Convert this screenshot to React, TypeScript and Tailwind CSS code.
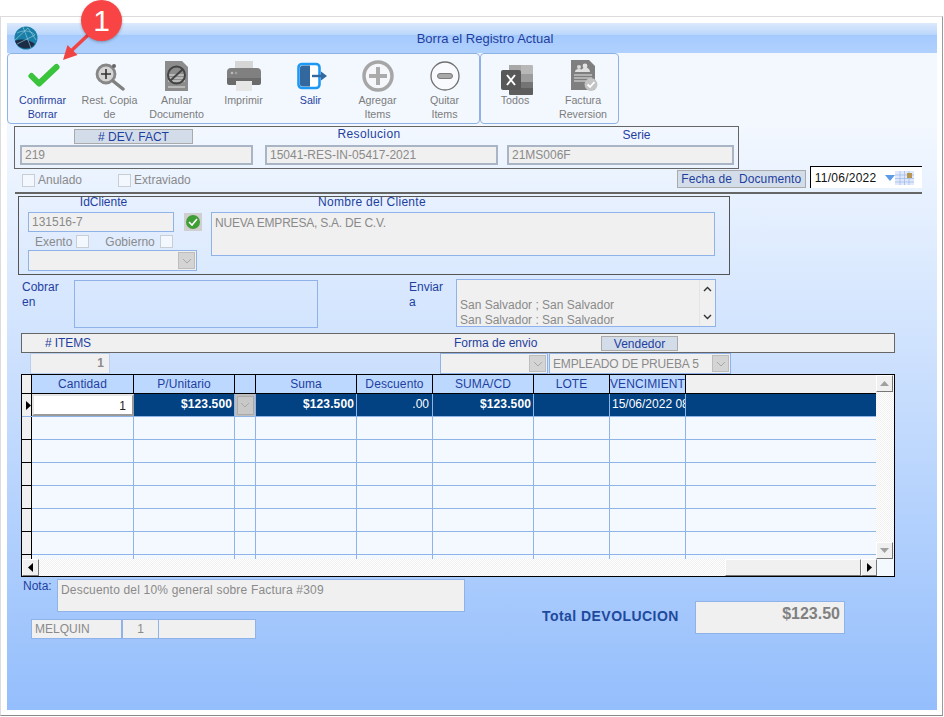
import type { ReactNode } from 'react';

const LABEL = 'text-[12px] leading-[14px] text-[#1f3f9f]';
const VALUE = 'text-[12px] leading-[14px] text-[#8a8a8a]';

function Chevron() {
  return (
    <svg width="10" height="6" viewBox="0 0 10 6" fill="none" stroke="#a8a8a8" strokeWidth="1">
      <path d="M1 1l4 4 4-4" />
    </svg>
  );
}

function SelectBox({ width, children }: { width: string; children?: ReactNode }) {
  return (
    <div className={`${width} h-[21px] flex items-center justify-between border border-[#8fb2e8] bg-[#f0f0f0] pl-[3px] pr-[1px] ${VALUE}`}>
      <span className="whitespace-nowrap tracking-[-0.15px]">{children}</span>
      <div className="w-[17px] h-[17px] flex items-center justify-center bg-[#d4d4d4] border border-[#bdbdbd]">
        <Chevron />
      </div>
    </div>
  );
}

function Check() {
  return <div className="w-[13px] h-[13px] shrink-0 border border-[#c9cdd4] bg-[#f3f8ff]" />;
}

function CheckIcon() {
  return (
    <svg width="36" height="30" viewBox="0 0 36 30">
      <path d="M6.500 15l7.500 7.500L31.500 6" fill="none" stroke="#3ac43c" strokeWidth="6" strokeLinecap="round" strokeLinejoin="round" />
    </svg>
  );
}

function RestoreIcon() {
  return (
    <svg width="32" height="30" viewBox="0 0 32 30">
      <circle cx="12" cy="13" r="9" fill="#d4d4d4" stroke="#878787" strokeWidth="2.800" />
      <path d="M19 20l10 8" stroke="#808080" strokeWidth="3.500" strokeLinecap="round" />
      <path d="M12 8v10M7 13h10" stroke="#333" strokeWidth="1.600" />
      <circle cx="20" cy="5" r="2" fill="#666" />
    </svg>
  );
}

function VoidIcon() {
  return (
    <svg width="24" height="30" viewBox="0 0 24 30">
      <path d="M0 0h17l6 6v24H0z" fill="#8c8c8c" />
      <path d="M3 14h17M3 17h17M3 20h17M3 26h17" stroke="#e4e4e4" strokeWidth="1.200" />
      <circle cx="11.500" cy="14" r="8.500" fill="none" stroke="#444" strokeWidth="2" />
      <path d="M5 20L18 8" stroke="#444" strokeWidth="2" />
    </svg>
  );
}

function PrinterIcon() {
  return (
    <svg width="34" height="30" viewBox="0 0 34 30">
      <path d="M8 0h18v8H8z" fill="#d6d6d6" />
      <path d="M0 11a4 4 0 0 1 4-4h26a4 4 0 0 1 4 4v11H0z" fill="#808080" />
      <path d="M0 17h34v5a2 2 0 0 1-2 2H2a2 2 0 0 1-2-2z" fill="#6b6b6b" />
      <path d="M9 20h16v10H9z" fill="#e6e6e6" />
      <circle cx="5" cy="12" r="1.300" fill="#bbb" />
      <circle cx="9" cy="12" r="1.300" fill="#a0a0a0" />
    </svg>
  );
}

function ExitIcon() {
  return (
    <svg width="32" height="30" viewBox="0 0 32 30">
      <rect x="3.500" y="3" width="21" height="24" rx="3.500" fill="#fff" stroke="#1e98f5" strokeWidth="2.600" />
      <path d="M5 7a2.500 2.500 0 0 1 2.500-2.500H15v21H7.500A2.500 2.500 0 0 1 5 23z" fill="#33689f" />
      <path d="M17 15h10" stroke="#33689f" strokeWidth="2.400" />
      <path d="M26 10.500l6 4.500-6 4.500z" fill="#33689f" />
    </svg>
  );
}

function PlusIcon() {
  return (
    <svg className="-mt-[1px]" width="32" height="32" viewBox="0 0 32 32">
      <circle cx="16" cy="16" r="14" fill="#f5f7fb" stroke="#a6a6a6" strokeWidth="3.500" />
      <path d="M16 7v18M7 16h18" stroke="#ababab" strokeWidth="4" />
    </svg>
  );
}

function MinusIcon() {
  return (
    <svg width="30" height="30" viewBox="0 0 30 30">
      <circle cx="15" cy="15" r="14" fill="#f8fafd" stroke="#707070" strokeWidth="1.300" />
      <rect x="7.500" y="12.500" width="15" height="5" rx="2.500" fill="#a8a8a8" stroke="#7a7a7a" strokeWidth="1" />
    </svg>
  );
}

function ExcelIcon() {
  return (
    <svg className="mt-[4px] ml-[3px]" width="32" height="30" viewBox="0 0 32 30">
      <path d="M8 0h22a2 2 0 0 1 2 2v7H8z" fill="#a8a8a8" />
      <path d="M20 0h10a2 2 0 0 1 2 2v7H20z" fill="#b8b8b8" />
      <path d="M8 9h24v8H8z" fill="#8c8c8c" />
      <path d="M20 9h12v8H20z" fill="#9c9c9c" />
      <path d="M8 17h24v12a1 1 0 0 1-1 1H9a1 1 0 0 1-1-1z" fill="#5e5e5e" />
      <path d="M20 17h12v6H20z" fill="#747474" />
      <rect x="0" y="5" width="20" height="20" rx="2" fill="#585858" />
      <path d="M6 10l8 10M14 10l-8 10" stroke="#fff" strokeWidth="2" />
    </svg>
  );
}

function InvoiceIcon() {
  return (
    <svg className="-mt-[1px] ml-[2px]" width="27" height="31" viewBox="0 0 27 31">
      <path d="M0 0h18l6 6v24H0z" fill="#7f7f7f" />
      <circle cx="8" cy="7" r="2" fill="#d8d8d8" />
      <circle cx="14" cy="6" r="2.400" fill="#e4e4e4" />
      <path d="M4 12a4 3 0 0 1 8 0zM10 12a4 4 0 0 1 9 0z" fill="#e0e0e0" />
      <path d="M3 15h18M3 18h18M3 21h12" stroke="#e6e6e6" strokeWidth="1.200" />
      <circle cx="20" cy="24.500" r="6.500" fill="#c4c4c4" />
      <path d="M16.500 24.500l2.500 2.500 4.500-5" fill="none" stroke="#fff" strokeWidth="1.800" />
    </svg>
  );
}

function Globe() {
  return (
    <svg width="24" height="24" viewBox="0 0 24 24">
      <circle cx="12" cy="12" r="11.500" fill="#1a7fa6" />
      <path d="M1 15a11.500 11.500 0 0 0 20 3c-5-4-13-6-20-3z" fill="#1c2c46" />
      <path d="M3 7c6-3 13-3 18 2M9 1l8 21M1 14L14 2M14 2l8 12M3 18L21 9" fill="none" stroke="#9ed3e6" strokeWidth="0.600" />
    </svg>
  );
}

function ToolButton({ icon, lines, width, dark }: { icon: ReactNode; lines: string[]; width: string; dark?: boolean }) {
  return (
    <div className={`${width} flex flex-col items-center`}>
      <div className="h-[38px] pt-[7px] flex items-start justify-center">{icon}</div>
      <div className={`text-center text-[10.7px] leading-[14px] whitespace-nowrap mt-[1px] ${dark ? 'text-[#1f3f9f]' : 'text-[#7c7c7c]'}`}>
        {lines.map((line) => (
          <div key={line}>{line}</div>
        ))}
      </div>
    </div>
  );
}

const COLUMNS = ['w-[102px]', 'w-[101px]', 'w-[21px]', 'w-[101px]', 'w-[76px]', 'w-[101px]', 'w-[76px]', 'w-[76px]'];
const HEADERS = ['Cantidad', 'P/Unitario', '', 'Suma', 'Descuento', 'SUMA/CD', 'LOTE', 'VENCIMIENTO'];
const DITHER = 'bg-[repeating-conic-gradient(#f0f0f0_0_25%,#ffffff_0_50%)] bg-[length:2px_2px]';
const RAISED = 'bg-[#f0f0f0] border border-t-white border-l-white border-r-[#777] border-b-[#777]';

function ItemsGrid() {
  return (
    <div className="ml-[14px] w-[874px] h-[203px] border border-black bg-[#f4f8ff] flex flex-col overflow-hidden">
      <div className="flex flex-1 min-h-0">
        <div className="flex-1 min-w-0 overflow-hidden">
          {/* cabecera */}
          <div className="flex h-[19px] border-b border-black">
            <div className="w-[10px] shrink-0 bg-[#f0f0f0] border-r border-black" />
            {HEADERS.map((h, i) => (
              <div
                key={i}
                className={`${COLUMNS[i]} shrink-0 bg-[#bcd8fe] border-r border-black text-[12px] leading-[18px] text-[#1f3f9f] text-center whitespace-nowrap overflow-hidden tracking-[0.1px]`}
              >
                {h}
              </div>
            ))}
            <div className="flex-1 bg-[#f0f0f0]" />
          </div>
          {/* fila seleccionada */}
          <div className="flex h-[23px] border-b border-[#8fb4e8] bg-[#024182] text-white text-[12px] font-bold leading-[21px]">
            <div className="w-[10px] shrink-0 bg-[#f0f0f0] border-r border-black flex items-center pl-[4px]">
              <svg width="5" height="9" viewBox="0 0 5 9">
                <path d="M0 0l5 4.500L0 9z" fill="#000" />
              </svg>
            </div>
            <div className="w-[102px] shrink-0 bg-white border-2 border-[#e4e4e4] border-b-[#9a9a9a] border-r-[#9a9a9a] text-right pr-[6px] font-normal text-[#222]">1</div>
            <div className="w-[101px] shrink-0 border-r border-[#8fb4e8] text-right pr-[2px] tracking-[0.12px]">$123.500</div>
            <div className="w-[21px] shrink-0 border-r border-[#8fb4e8] flex items-center justify-center bg-[#bdbdbd]">
              <div className="w-[17px] h-[19px] bg-[#c8c8c8] flex items-center justify-center border border-[#aaa]">
                <Chevron />
              </div>
            </div>
            <div className="w-[101px] shrink-0 border-r border-[#8fb4e8] text-right pr-[2px] tracking-[0.12px]">$123.500</div>
            <div className="w-[76px] shrink-0 border-r border-[#8fb4e8] text-right pr-[3px] font-normal">.00</div>
            <div className="w-[101px] shrink-0 border-r border-[#8fb4e8] text-right pr-[2px] tracking-[0.12px]">$123.500</div>
            <div className="w-[76px] shrink-0 border-r border-[#8fb4e8]" />
            <div className="w-[76px] shrink-0 border-r border-[#8fb4e8] font-normal pl-[2px] whitespace-nowrap overflow-hidden">15/06/2022 08:00</div>
            <div className="flex-1" />
          </div>
          {/* filas vacias */}
          {[0, 1, 2, 3, 4, 5, 6].map((r) => (
            <div key={r} className="flex h-[23px] border-b border-[#8fb4e8]">
              <div className="w-[10px] shrink-0 bg-[#f0f0f0] border-r border-black border-b -mb-px border-b-black" />
              {COLUMNS.map((c, i) => (
                <div key={i} className={`${c} shrink-0 border-r border-[#8fb4e8]`} />
              ))}
            </div>
          ))}
        </div>
        {/* barra vertical */}
        <div className={`w-[18px] shrink-0 flex flex-col justify-between ${DITHER}`}>
          <div className={`h-[17px] w-[17px] flex items-center justify-center ${RAISED}`}>
            <svg width="9" height="5" viewBox="0 0 9 5">
              <path d="M4.500 0L9 5H0z" fill="#a0a0a0" />
            </svg>
          </div>
          <div className={`h-[17px] w-[17px] flex items-center justify-center ${RAISED}`}>
            <svg width="9" height="5" viewBox="0 0 9 5">
              <path d="M0 0h9L4.500 5z" fill="#a0a0a0" />
            </svg>
          </div>
        </div>
      </div>
      {/* barra horizontal */}
      <div className="h-[17px] shrink-0 flex">
        <div className={`w-[17px] flex items-center justify-center ${RAISED}`}>
          <svg width="5" height="9" viewBox="0 0 5 9">
            <path d="M5 0v9L0 4.500z" fill="#000" />
          </svg>
        </div>
        <div className={`w-[686px] ${DITHER}`} />
        <div className={`w-[136px] ${RAISED}`} />
        <div className={`w-[16px] flex items-center justify-center ${RAISED}`}>
          <svg width="5" height="9" viewBox="0 0 5 9">
            <path d="M0 0v9l5-4.500z" fill="#000" />
          </svg>
        </div>
        <div className="flex-1" />
      </div>
    </div>
  );
}

export default function App() {
  return (
    <div className="relative w-[944px] h-[717px] overflow-hidden bg-white pt-[16px] font-['Liberation_Sans',Arial,sans-serif]">
      <div className="h-[700px] w-[943px] border border-[#dcdcdc] border-b-[#8a8a8a] border-r-[#9a9a9a] pl-[6px] pt-[6px]">
        <div className="w-[930px] h-[687px] flex flex-col">
          {/* titulo */}
          <div className="h-[30px] shrink-0 flex items-center pl-[7px] bg-[linear-gradient(#dbe9fc_0%,#bdd8fc_38%,#a5cafd_40%,#b0d1fe_100%)]">
            <Globe />
            <div className="flex-1 text-center pr-[5px] pt-[1px] text-[13px] text-[#1f3f9f]">Borra el Registro Actual</div>
          </div>

          {/* ribbon */}
          <div className="h-[71px] shrink-0 flex bg-[#f3f8ff]">
            <div className="w-[473px] border border-[#8fb2e4] rounded-[4px] pl-[1px] flex">
              <ToolButton width="w-[67px]" dark icon={<CheckIcon />} lines={['Confirmar', 'Borrar']} />
              <ToolButton width="w-[67px]" icon={<RestoreIcon />} lines={['Rest. Copia', 'de']} />
              <ToolButton width="w-[67px]" icon={<VoidIcon />} lines={['Anular', 'Documento']} />
              <ToolButton width="w-[67px]" icon={<PrinterIcon />} lines={['Imprimir']} />
              <ToolButton width="w-[67px]" dark icon={<ExitIcon />} lines={['Salir']} />
              <ToolButton width="w-[67px]" icon={<PlusIcon />} lines={['Agregar', 'Items']} />
              <ToolButton width="w-[67px]" icon={<MinusIcon />} lines={['Quitar', 'Items']} />
            </div>
            <div className="w-[139px] border border-[#8fb2e4] rounded-[4px] flex">
              <ToolButton width="w-[68px]" icon={<ExcelIcon />} lines={['Todos']} />
              <ToolButton width="w-[68px]" icon={<InvoiceIcon />} lines={['Factura', 'Reversion']} />
            </div>
          </div>

          {/* cuerpo */}
          <div className="flex-1 flex flex-col bg-[linear-gradient(#f3f8ff,#94befc)]">
            {/* documento */}
            <div className="ml-[7px] mt-[2px] w-[725px] h-[43px] border border-[#666] flex pl-[5px] shrink-0">
              <div className="w-[233px] flex flex-col">
                <div className={`ml-[54px] mt-[2px] w-[119px] h-[15px] bg-[#d3dde9] border border-[#aaa] text-center ${LABEL}`}>
                  # DEV. FACT
                </div>
                <div className={`h-[20px] border-2 border-[#a9b5c4] bg-[#f0f0f0] pl-[3px] mt-[1px] !leading-[17px] ${VALUE}`}>219</div>
              </div>
              <div className="ml-[12px] w-[233px] flex flex-col">
                <div className={`h-[17px] text-center pr-[25px] tracking-[0.35px] ${LABEL}`}>Resolucion</div>
                <div className={`h-[20px] border-2 border-[#a9b5c4] bg-[#f0f0f0] pl-[3px] mt-[1px] !leading-[17px] ${VALUE}`}>15041-RES-IN-05417-2021</div>
              </div>
              <div className="ml-[9px] w-[227px] flex flex-col">
                <div className={`h-[17px] pt-[1px] pl-[32px] text-center ${LABEL}`}>Serie</div>
                <div className={`h-[20px] border-2 border-[#a9b5c4] bg-[#f0f0f0] pl-[3px] mt-[1px] !leading-[17px] ${VALUE}`}>21MS006F</div>
              </div>
            </div>

            {/* estado y fecha */}
            <div className="-mt-[3px] h-[22px] shrink-0 flex items-end pl-[15px]">
              <div className="flex items-center mb-[1px]">
                <Check />
                <span className={`ml-[3px] ${VALUE}`}>Anulado</span>
              </div>
              <div className="flex items-center ml-[36px] mb-[1px]">
                <Check />
                <span className={`ml-[3px] ${VALUE}`}>Extraviado</span>
              </div>
              <div className={`ml-[486px] w-[129px] h-[18px] bg-[#d3dde9] border border-[#aaa] text-center !leading-[17px] tracking-[0.1px] ${LABEL}`}>
                Fecha de&nbsp; Documento
              </div>
              <div className="ml-[4px] w-[112px] h-[22px] bg-white border-t border-l border-black flex items-center pl-[4px] text-[12px] tracking-[0.25px] text-[#111]">
                <span>11/06/2022</span>
                <svg className="ml-[9px]" width="10" height="6" viewBox="0 0 10 6">
                  <path d="M0 0h10L5 6z" fill="#5b9be8" />
                </svg>
                <svg width="19" height="14" viewBox="0 0 19 14">
                  <path d="M0 0h19v14H0z" fill="#dfe9fb" />
                  <path d="M0 4h19M0 7.500h19M0 11h19M5 0v14M9.500 0v14M14 0v14" stroke="#9db8e8" strokeWidth="0.700" />
                  <rect x="12" y="2" width="5" height="5" fill="#b8954e" />
                </svg>
              </div>
            </div>

            <div className="ml-[8px] mt-[4px] w-[907px] h-[2px] bg-[#666] shrink-0" />

            {/* cliente */}
            <div className="ml-[11px] mt-[2px] w-[712px] h-[79px] border border-[#555] flex pl-[9px] shrink-0">
              <div className="w-[169px]">
                <div className={`h-[15px] text-center pr-[18px] !leading-[10px] ${LABEL}`}>IdCliente</div>
                <div className="flex items-center">
                  <div className={`w-[146px] shrink-0 h-[20px] border border-[#8fb2e8] bg-[#f0f0f0] pl-[3px] !leading-[18px] ${VALUE}`}>131516-7</div>
                  <div className="ml-[10px] w-[18px] h-[18px] shrink-0 bg-[#cfcfcf] flex items-center justify-center">
                    <svg width="14" height="14" viewBox="0 0 14 14">
                      <circle cx="7" cy="7" r="7" fill="#3f9e35" />
                      <path d="M3 7l3 3 5-6" fill="none" stroke="#fff" strokeWidth="1.600" />
                    </svg>
                  </div>
                </div>
                <div className="flex items-center h-[17px] mt-[1px] pl-[7px]">
                  <span className={VALUE}>Exento</span>
                  <div className="ml-[4px]">
                    <Check />
                  </div>
                  <span className={`ml-[16px] ${VALUE}`}>Gobierno</span>
                  <div className="ml-[5px]">
                    <Check />
                  </div>
                </div>
                <SelectBox width="w-[169px]" />
              </div>
              <div className="ml-[14px] w-[504px]">
                <div className={`h-[15px] text-center pr-[182px] tracking-[0.28px] !leading-[10px] ${LABEL}`}>Nombre del Cliente</div>
                <div className={`h-[44px] border border-[#8fb2e8] bg-[#f0f0f0] pl-[3px] pt-[3px] tracking-[-0.22px] ${VALUE}`}>NUEVA EMPRESA, S.A. DE C.V.</div>
              </div>
            </div>

            {/* cobrar / enviar */}
            <div className="flex mt-[5px] h-[48px] pl-[15px] shrink-0">
              <div className={`w-[52px] ${LABEL} !leading-[15px]`}>
                Cobrar
                <br />
                en
              </div>
              <div className="w-[244px] h-[48px] border border-[#8fb2e8]" />
              <div className={`ml-[91px] w-[47px] ${LABEL} !leading-[15px]`}>
                Enviar
                <br />a
              </div>
              <div className={`-mt-[1px] w-[260px] h-[48px] border border-[#8fb2e8] bg-[#f0f0f0] flex overflow-hidden pl-[3px] ${VALUE}`}>
                <div className="flex-1 pt-[18px] !leading-[15px]">
                  <div>San Salvador ; San Salvador</div>
                  <div>San Salvador : San Salvador</div>
                </div>
                <div className="w-[16px] flex flex-col justify-between items-center py-[6px] border-l border-[#e4e4e4]">
                  <svg width="9" height="6" viewBox="0 0 9 6" fill="none" stroke="#333" strokeWidth="1.400">
                    <path d="M1 5l3.500-3.500L8 5" />
                  </svg>
                  <svg width="9" height="6" viewBox="0 0 9 6" fill="none" stroke="#333" strokeWidth="1.400">
                    <path d="M1 1l3.500 3.500L8 1" />
                  </svg>
                </div>
              </div>
            </div>

            {/* items */}
            <div className="ml-[14px] mt-[5px] w-[874px] h-[20px] border border-[#666] bg-[#f0f0f0] flex items-center pl-[23px] shrink-0">
              <span className={`w-[45px] shrink-0 whitespace-nowrap tracking-[-0.1px] ${LABEL}`}># ITEMS</span>
              <span className={`ml-[364px] w-[85px] shrink-0 whitespace-nowrap ${LABEL}`}>Forma de envio</span>
              <div className={`ml-[62px] w-[77px] h-[15px] bg-[#d3dde9] border border-[#aaa] text-center ${LABEL}`}>Vendedor</div>
            </div>
            <div className="flex h-[21px] pl-[23px] shrink-0">
              <div className="w-[80px] h-[21px] border border-[#b8cfef] bg-[#f0f0f0] text-right pr-[5px] text-[12px] font-bold leading-[19px] text-[#8a8a8a]">1</div>
              <div className="ml-[330px]">
                <SelectBox width="w-[108px]" />
              </div>
              <div className="ml-[1px]">
                <SelectBox width="w-[182px]">EMPLEADO DE PRUEBA 5</SelectBox>
              </div>
            </div>

            <ItemsGrid />

            {/* pie */}
            <div className="flex shrink-0">
              <div className="w-[458px]">
                <div className="flex mt-[2px] pl-[16px]">
                  <span className={`w-[34px] ${LABEL}`}>Nota:</span>
                  <div className={`w-[408px] h-[33px] border border-[#8fb2e8] bg-[#f0f0f0] pl-[3px] pt-[3px] tracking-[0.18px] ${VALUE}`}>
                    Descuento del 10% general sobre Factura #309
                  </div>
                </div>
                <div className={`flex mt-[7px] ml-[24px] h-[20px] !leading-[18px] ${VALUE}`}>
                  <div className="w-[91px] border border-[#8fb2e8] bg-[#f0f0f0] pl-[3px]">MELQUIN</div>
                  <div className="w-[37px] border border-[#8fb2e8] bg-[#f0f0f0] text-center">1</div>
                  <div className="w-[98px] -ml-px border border-[#8fb2e8] bg-[#f0f0f0]" />
                </div>
              </div>
              <div className="ml-[77px] mt-[24px] flex items-start">
                <span className="w-[153px] mt-[7px] text-[14px] leading-[16px] font-bold tracking-[0.45px] whitespace-nowrap text-[#1f4a9c]">Total DEVOLUCION</span>
                <div className="w-[150px] h-[33px] border border-[#8fb2e8] bg-[#f0f0f0] text-right pr-[4px] pt-[3px] text-[16px] leading-[18px] font-bold text-[#808080]">
                  $123.50
                </div>
              </div>
            </div>
          </div>
        </div>
      </div>

      {/* anotacion */}
      <svg className="absolute left-[58px] top-[30px]" width="36" height="34" viewBox="0 0 36 34">
        <path d="M30 5L12 22" stroke="#f04444" strokeWidth="3.500" />
        <path d="M5 30l4.500-15 10 10z" fill="#f04444" />
      </svg>
      <div className="absolute left-[81px] top-0 w-[41px] h-[41px] rounded-full bg-[#f84444] shadow-[0_1px_3px_rgba(0,0,0,0.3)] flex items-center justify-center text-white text-[30px] leading-none">
        1
      </div>
    </div>
  );
}
